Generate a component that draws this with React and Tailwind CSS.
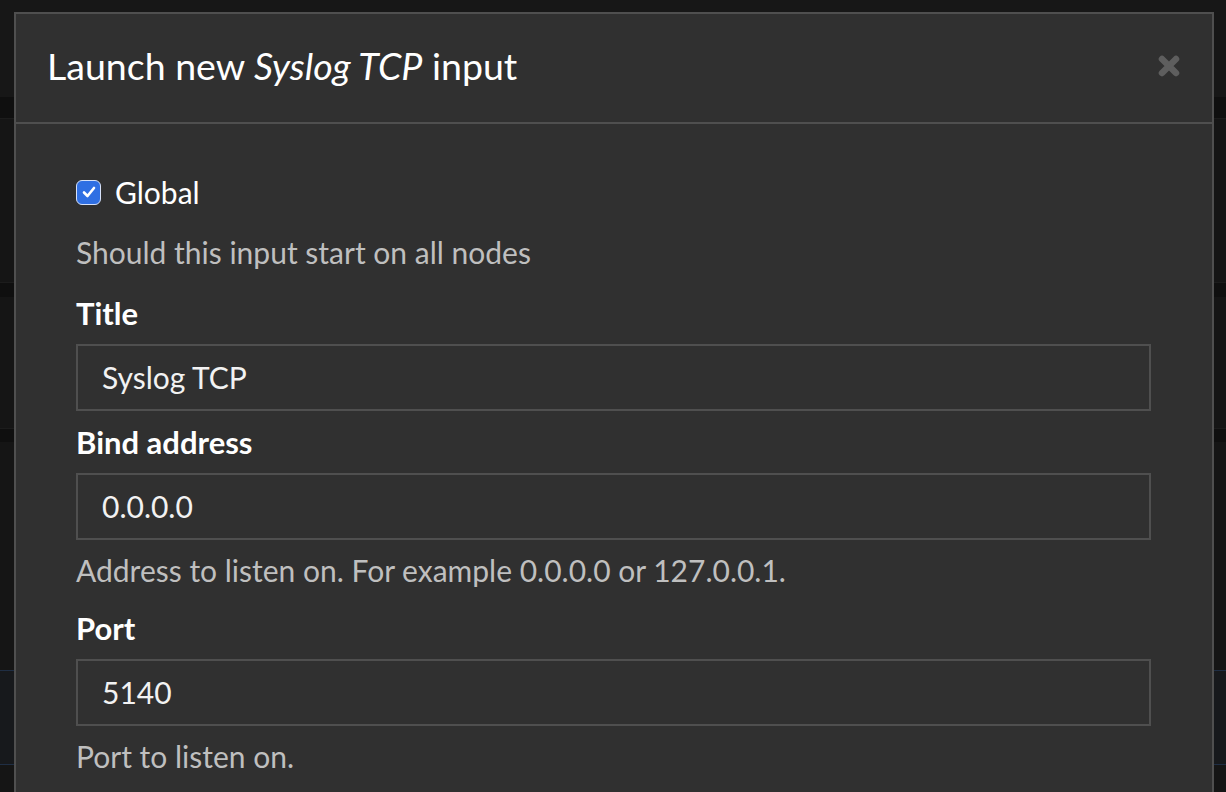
import React from "react";

const Field = ({ label, value, help, className = "" }) => {
  return (
    <div className={className}>
      <div className="h-[40px] leading-[40px] text-[31px] font-bold text-white">
        {label}
      </div>
      <div className="mt-[11px] h-[67px] border-2 border-[#4f4f4f] bg-[#303030] pl-[24px] flex items-center text-[30px] text-[#f2f2f2]">
        {value}
      </div>
      {help && (
        <div className="mt-[10px] h-[40px] leading-[40px] text-[30px] text-[#bfbfbf]">
          {help}
        </div>
      )}
    </div>
  );
};

const App = () => {
  return (
    <div
      className="relative w-[1226px] h-[792px] overflow-hidden bg-[#151515]"
      style={{ fontFamily: "Lato, 'Open Sans', sans-serif" }}
    >
      {/* page behind the modal */}
      <div className="h-[97px] bg-[#171717]" />
      <div className="h-[22px] bg-[#0f0f0f] border-b border-[#1c1c1c]" />
      <div className="h-[163px]" />
      <div className="h-[15px] bg-[#0f0f0f] border-t border-[#1c1c1c]" />
      <div className="h-[131px]" />
      <div className="h-[14px] bg-[#0f0f0f] border-t border-[#1c1c1c]" />
      <div className="h-[228px]" />
      <div className="h-[95px] bg-[#17191c] border-y border-[#1f2e44]" />
      <div className="flex-1 bg-[#131313]" />

      {/* modal */}
      <div className="absolute left-[14px] top-[12px] w-[1200px] h-[800px] border-2 border-[#4f4f4f] bg-[#303030]">
        <div className="h-[110px] border-b-2 border-[#4f4f4f] pl-[31px] pr-[32px] flex items-center justify-between">
          <h4 className="text-[37.5px] text-white leading-none -mt-[4px]">
            Launch new <em>Syslog TCP</em> input
          </h4>
          <svg width="22" height="22" viewBox="0 0 22 22" className="-mt-[4px]">
            <path
              d="M4 4 L18 18 M18 4 L4 18"
              stroke="#5e5e5e"
              strokeWidth="6.5"
              strokeLinecap="round"
            />
          </svg>
        </div>

        <div className="pt-[48px] pl-[60px] pr-[61px]">
          <div className="h-[40px] flex items-center gap-[14px]">
            <div className="w-[25px] h-[25px] rounded-[6px] border-[1.5px] border-[#d6e1f8] bg-[#2f6fe3] flex items-center justify-center">
              <svg width="16" height="16" viewBox="0 0 16 16">
                <path
                  d="M3 8.5 L6.5 12 L13 4"
                  fill="none"
                  stroke="white"
                  strokeWidth="2.6"
                  strokeLinecap="round"
                  strokeLinejoin="round"
                />
              </svg>
            </div>
            <span className="text-[30px] text-white">Global</span>
          </div>
          <div className="mt-[20px] h-[40px] leading-[40px] text-[30px] text-[#bfbfbf]">
            Should this input start on all nodes
          </div>

          <Field label="Title" value="Syslog TCP" className="mt-[21px]" />
          <Field
            label="Bind address"
            value="0.0.0.0"
            help="Address to listen on. For example 0.0.0.0 or 127.0.0.1."
            className="mt-[11px]"
          />
          <Field
            label="Port"
            value="5140"
            help="Port to listen on."
            className="mt-[18px]"
          />
        </div>
      </div>
    </div>
  );
};

export default App;
